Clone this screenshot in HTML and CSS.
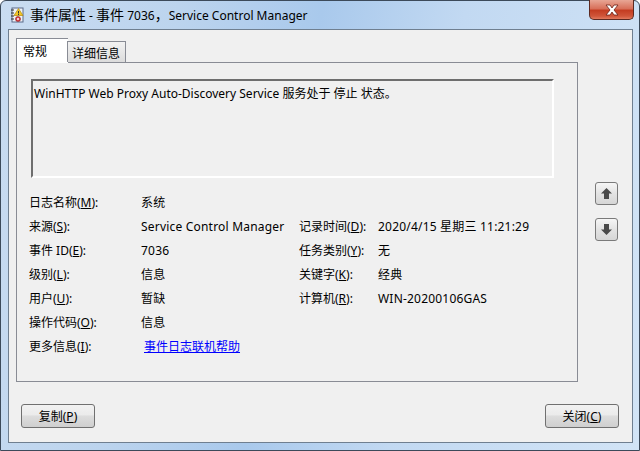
FILE: index.html
```html
<!DOCTYPE html>
<html lang="zh-CN">
<head>
  <meta charset="UTF-8" />
  <title>事件属性 - 事件 7036，Service Control Manager</title>
  <link rel="stylesheet" href="styles.css">
</head>
<body>
  <div class="window">
    <div class="titlebar">
      <svg class="app-icon" width="16" height="16" viewBox="0 0 16 16">
        <rect x="3" y="1" width="11" height="14" fill="#eef1f6" stroke="#5a6a8a"/>
        <line x1="2" y1="3" x2="5" y2="3" stroke="#333"/>
        <line x1="2" y1="6" x2="5" y2="6" stroke="#333"/>
        <line x1="2" y1="9" x2="5" y2="9" stroke="#333"/>
        <line x1="2" y1="12" x2="5" y2="12" stroke="#333"/>
        <polygon points="9.5,1.5 14,8.5 5,8.5" fill="#f4c623" stroke="#b08a10" stroke-width="0.7"/>
        <rect x="9" y="4" width="1" height="2.5" fill="#333"/>
        <rect x="9" y="7" width="1" height="1" fill="#333"/>
        <circle cx="9" cy="12" r="2.5" fill="#d9454a" stroke="#8a1d20" stroke-width="0.6"/>
        <circle cx="9" cy="12" r="1" fill="#fff"/>
      </svg>
      <span class="title"><span class="cjk">事件属性</span> - <span class="cjk">事件</span> 7036<span class="cjk">，</span>Service Control Manager</span>
      <button class="close-btn">
        <svg width="16" height="12" viewBox="0 0 16 12">
          <path d="M2 1 H6 L8 4 L10 1 H14 L10 6 L14 11 H10 L8 8 L6 11 H2 L6 6 Z" fill="#fff" stroke="#6a2015" stroke-width="0.8"/>
        </svg>
      </button>
    </div>

    <div class="client">
      <div class="main">
        <div class="left">
          <div class="tabs">
            <div class="tab active">常规</div>
            <div class="tab">详细信息</div>
          </div>
          <div class="panel">
            <div class="desc">WinHTTP Web Proxy Auto-Discovery Service 服务处于 停止 状态。</div>
            <div class="fields">
              <div class="lbl">日志名称(<u>M</u>):</div>
              <div class="val">系统</div>
              <div></div><div></div>

              <div class="lbl">来源(<u>S</u>):</div>
              <div class="val">Service Control Manager</div>
              <div class="lbl">记录时间(<u>D</u>):</div>
              <div class="val">2020/4/15 星期三 11:21:29</div>

              <div class="lbl">事件 ID(<u>E</u>):</div>
              <div class="val">7036</div>
              <div class="lbl">任务类别(<u>Y</u>):</div>
              <div class="val">无</div>

              <div class="lbl">级别(<u>L</u>):</div>
              <div class="val">信息</div>
              <div class="lbl">关键字(<u>K</u>):</div>
              <div class="val">经典</div>

              <div class="lbl">用户(<u>U</u>):</div>
              <div class="val">暂缺</div>
              <div class="lbl">计算机(<u>R</u>):</div>
              <div class="val">WIN-20200106GAS</div>

              <div class="lbl">操作代码(<u>O</u>):</div>
              <div class="val">信息</div>
              <div></div><div></div>

              <div class="lbl">更多信息(<u>I</u>):</div>
              <div class="val"><a class="help-link" href="#">事件日志联机帮助</a></div>
              <div></div><div></div>
            </div>
          </div>
        </div>
        <div class="nav">
          <button class="arrow-btn">
            <svg width="13" height="13" viewBox="0 0 13 13"><path d="M6.5 1 L12 6.5 H9 V12 H4 V6.5 H1 Z" fill="#4a4a4a"/></svg>
          </button>
          <button class="arrow-btn">
            <svg width="13" height="13" viewBox="0 0 13 13"><path d="M4 1 H9 V6.5 H12 L6.5 12 L1 6.5 H4 Z" fill="#4a4a4a"/></svg>
          </button>
        </div>
      </div>
      <div class="footer">
        <button class="btn">复制(<u>P</u>)</button>
        <button class="btn">关闭(<u>C</u>)</button>
      </div>
    </div>
  </div>
</body>
</html>
```

FILE: styles.css
```css
html, body {
  margin: 0;
  padding: 0;
}
body {
  width: 640px;
  height: 451px;
  overflow: hidden;
  font-family: "Noto Sans", "Noto Sans CJK SC", sans-serif;
  font-size: 12px;
  color: #000;
}
.window {
  box-sizing: border-box;
  width: 640px;
  height: 451px;
  border: 1px solid #3c4a5a;
  border-radius: 6px 6px 0 0;
  background: linear-gradient(100deg, #c9dcf1 0%, #bcd4ee 25%, #a9c9ec 45%, #c2d9f2 65%, #d2e4f6 100%);
  display: flex;
  flex-direction: column;
  padding: 0 6px 7px 7px;
}
.titlebar {
  height: 28px;
  display: flex;
  align-items: center;
  position: relative;
}
.app-icon {
  margin: 0 5px 0 1px;
}
.title {
  font-size: 12px;
  color: #000;
  margin-top: -2px;
}
.title .cjk {
  font-size: 14px;
}
.close-btn {
  position: absolute;
  right: -1px;
  top: -1px;
  width: 45px;
  height: 20px;
  border: 1px solid #5c2a22;
  border-top: none;
  border-radius: 0 0 5px 5px;
  background: linear-gradient(#e8a695 0%, #d8705a 45%, #c43d22 55%, #d0563a 85%, #e27a5e 100%);
  display: flex;
  align-items: center;
  justify-content: center;
  padding: 0;
}
.client {
  flex: 1;
  background: #f0f0f0;
  border: 1px solid #6f7f90;
  display: flex;
  flex-direction: column;
}
.main {
  display: flex;
  padding: 8px 0 0 7px;
}
.left {
  width: 562px;
}
.tabs {
  display: flex;
  align-items: flex-end;
  height: 24px;
  position: relative;
  z-index: 1;
}
.tab {
  box-sizing: border-box;
  height: 21px;
  padding: 2px 5px 0 4px;
  border: 1px solid #898c95;
  border-bottom: none;
  background: linear-gradient(#f2f2f2, #dcdcdc);
  margin-left: -1px;
}
.tab.active {
  height: 25px;
  width: 52px;
  margin-left: 0;
  margin-bottom: -1px;
  background: #fff;
  padding: 3px 0 0 6px;
  border-right: none;
}
.panel {
  box-sizing: border-box;
  height: 320px;
  border: 1px solid #898c95;
  padding: 16px 0 0 12px;
}
.desc {
  box-sizing: border-box;
  width: 523px;
  height: 99px;
  margin-left: 2px;
  border-top: 2px solid #6e6e6e;
  border-left: 2px solid #6e6e6e;
  border-right: 2px solid #fff;
  border-bottom: 2px solid #fff;
  padding: 5px 1px;
  line-height: 16px;
}
.fields {
  margin-top: 12px;
  display: grid;
  grid-template-columns: 112px 158px 79px 1fr;
  grid-auto-rows: 24px;
  align-items: center;
}
.val {
  letter-spacing: 0.2px;
}
.help-link {
  color: #0000ff;
  margin-left: 3px;
  letter-spacing: 0;
}
.nav {
  display: flex;
  flex-direction: column;
  gap: 13px;
  padding: 144px 0 0 17px;
}
.arrow-btn {
  box-sizing: border-box;
  width: 23px;
  height: 23px;
  border: 1px solid #7a7a7a;
  border-radius: 3px;
  background: linear-gradient(#f6f6f6, #e3e3e3 50%, #d6d6d6);
  padding: 0;
  display: flex;
  align-items: center;
  justify-content: center;
}
.footer {
  display: flex;
  justify-content: space-between;
  padding: 22px 13px 0 12px;
}
.btn {
  box-sizing: border-box;
  width: 74px;
  height: 24px;
  border: 1px solid #707070;
  border-radius: 3px;
  background: linear-gradient(#f2f2f2 0%, #ebebeb 45%, #dddddd 50%, #cfcfcf 100%);
  font-family: "Noto Sans", "Noto Sans CJK SC", sans-serif;
  font-size: 12px;
  color: #000;
  padding: 0;
}
```
